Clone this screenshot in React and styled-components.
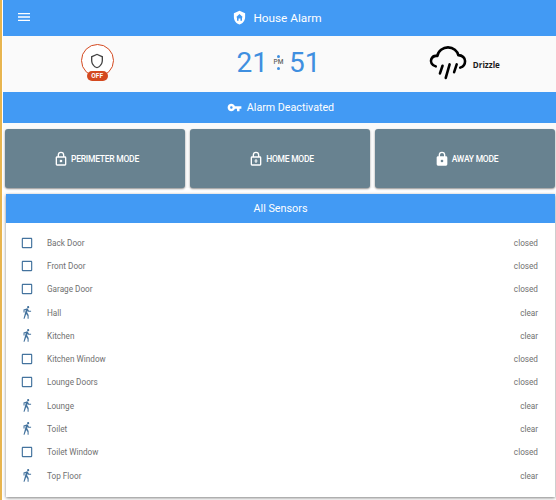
import React from "react";
import styled, { createGlobalStyle } from "styled-components";

const Global = createGlobalStyle`
  html, body { margin: 0; padding: 0; background: #fafafa; }
  body { font-family: Roboto, "Liberation Sans", sans-serif; }
`;

const Page = styled.div`
  width: 556px;
  height: 500px;
  overflow: hidden;
  box-sizing: border-box;
  border-left: 2px solid #e8b54f;
  padding-left: 1px;
  background: #fff;
`;
const Header = styled.header`
  position: relative;
  height: 36px;
  box-sizing: border-box;
  background: #429af4;
  color: #fff;
  display: flex;
  align-items: center;
  justify-content: center;
  gap: 6px;
  font-size: 11.8px;
  padding: 0 5px 1px 0;
`;
const MenuButton = styled.svg`
  position: absolute;
  left: 13px;
  top: 9px;
`;
const StatusRow = styled.section`
  height: 56px;
  background: #fafafa;
  display: grid;
  grid-template-columns: 1fr 1fr 1fr;
  align-items: center;
  justify-items: center;
`;
const Badge = styled.div`
  position: relative;
  width: 31px;
  height: 31px;
  border: 1.3px solid #d4491f;
  border-radius: 50%;
  display: flex;
  align-items: center;
  justify-content: center;
  margin: -6.5px 0 0 4px;
  background: #fff;
`;
const BadgeLabel = styled.span`
  position: absolute;
  left: 5px;
  bottom: -5px;
  width: 21px;
  height: 10px;
  border-radius: 5px;
  background: #d4491f;
  color: #fff;
  font-size: 6.5px;
  font-weight: 700;
  line-height: 10px;
  text-align: center;
`;
const Clock = styled.div`
  display: flex;
  align-items: center;
  color: #3f8fe0;
  font-size: 28px;
  line-height: 30px;
  margin: -3px 2px 0 0;
`;
const ClockMiddle = styled.div`
  width: 21px;
  display: flex;
  flex-direction: column;
  align-items: center;
  gap: 1px;
`;
const ClockDot = styled.span`
  width: 3px;
  height: 3px;
  border-radius: 50%;
  background: #3f8fe0;
`;
const Meridiem = styled.span`
  color: #666;
  font-size: 6.5px;
  line-height: 7px;
  font-weight: 500;
`;
const Weather = styled.div`
  display: flex;
  align-items: center;
  gap: 6px;
  margin: -4px 0 0 1px;
`;
const WeatherLabel = styled.span`
  font-family: "Open Sans", sans-serif;
  font-size: 8px;
  font-weight: 700;
  color: #1a1a1a;
  padding-top: 5px;
`;
const Banner = styled.div`
  height: 31px;
  box-sizing: border-box;
  background: #429af4;
  color: #fff;
  display: flex;
  align-items: center;
  justify-content: center;
  gap: 5px;
  font-size: 10.7px;
  padding-left: 2px;
`;
const Modes = styled.div`
  display: grid;
  grid-template-columns: repeat(3, 180px);
  gap: 5px;
  padding: 6px 0 0 2px;
  background: #fafafa;
`;
const ModeButton = styled.button`
  height: 59px;
  border: 0;
  border-radius: 3px;
  background: #688290;
  color: #fff;
  box-shadow: 0 1px 2px rgba(0, 0, 0, 0.45);
  display: flex;
  align-items: center;
  justify-content: center;
  gap: 2px;
  font-family: Roboto, sans-serif;
  font-size: 8.5px;
  letter-spacing: -0.25px;
  font-weight: 500;
  padding: 0 0 0 2px;
`;
const Card = styled.section`
  margin: 6px 0 0 3px;
  width: 549px;
  background: #fff;
  box-shadow: 0 1px 3px rgba(0, 0, 0, 0.5);
  padding-bottom: 10px;
`;
const CardTitle = styled.div`
  height: 29px;
  background: #429af4;
  color: #fff;
  font-size: 10.8px;
  display: flex;
  align-items: center;
  justify-content: center;
`;
const SensorList = styled.ul`
  list-style: none;
  margin: 0;
  padding: 8px 17px 0 13.5px;
`;
const Sensor = styled.li`
  height: 23.3px;
  display: flex;
  align-items: center;
  font-size: 8.2px;
  color: #707070;
`;
const SensorName = styled.span`
  margin-left: 13.5px;
  flex: 1;
`;

const Icon = ({ d, size = 24, color = "currentColor" }) => (
  <svg width={size} height={size} viewBox="0 0 24 24" fill={color}>
    <path d={d} />
  </svg>
);

const paths = {
  shieldHome: "M12,1L3,5V11C3,16.5 6.8,21.7 12,23C17.2,21.7 21,16.5 21,11V5L12,1M12,6.5L17.5,11.5H16V17H13.5V13.5H10.5V17H8V11.5H6.5L12,6.5Z",
  key: "M7 14C5.9 14 5 13.1 5 12S5.9 10 7 10 9 10.9 9 12 8.1 14 7 14M12.6 10C11.8 7.7 9.6 6 7 6C3.7 6 1 8.7 1 12S3.7 18 7 18C9.6 18 11.8 16.3 12.6 14H16V18H20V14H23V10H12.6Z",
  lockOutline: "M12,17C10.89,17 10,16.1 10,15C10,13.89 10.89,13 12,13A2,2 0 0,1 14,15A2,2 0 0,1 12,17M18,20V10H6V20H18M18,8A2,2 0 0,1 20,10V20A2,2 0 0,1 18,22H6C4.89,22 4,21.1 4,20V10C4,8.89 4.89,8 6,8H7V6A5,5 0 0,1 12,1A5,5 0 0,1 17,6V8H18M12,3A3,3 0 0,0 9,6V8H15V6A3,3 0 0,0 12,3Z",
  lockPlus: "M18,8H17V6A5,5 0 0,0 12,1A5,5 0 0,0 7,6V8H6A2,2 0 0,0 4,10V20A2,2 0 0,0 6,22H18A2,2 0 0,0 20,20V10A2,2 0 0,0 18,8M12,3A3,3 0 0,1 15,6V8H9V6A3,3 0 0,1 12,3M18,20H6V10H18V20M12,12.5L13,12.5V14.5H15V15.5H13V17.5H11V15.5H9V14.5H11V12.5H12Z",
  lock: "M12,17A2,2 0 0,0 14,15C14,13.89 13.1,13 12,13A2,2 0 0,0 10,15A2,2 0 0,0 12,17M18,8A2,2 0 0,1 20,10V20A2,2 0 0,1 18,22H6A2,2 0 0,1 4,20V10C4,8.89 4.9,8 6,8H7V6A5,5 0 0,1 12,1A5,5 0 0,1 17,6V8H18M12,3A3,3 0 0,0 9,6V8H15V6A3,3 0 0,0 12,3Z",
  walk: "M14.12,10H19V8.2H15.38L13.38,4.87C13.08,4.37 12.54,4.03 11.92,4.03C11.74,4.03 11.58,4.06 11.42,4.11L6,5.8V11H7.8V7.33L9.91,6.67L6,22H7.8L10.67,13.89L13,17V22H14.8V15.59L12.31,11.05L13.04,8.18M14,3.8C15,3.8 15.8,3 15.8,2C15.8,1 15,0.2 14,0.2C13,0.2 12.2,1 12.2,2C12.2,3 13,3.8 14,3.8Z",
  box: "M19,3H5C3.89,3 3,3.89 3,5V19A2,2 0 0,0 5,21H19A2,2 0 0,0 21,19V5C21,3.89 20.1,3 19,3M19,5V19H5V5H19Z",
  shieldOutline: "M21,11C21,16.55 17.16,21.74 12,23C6.84,21.74 3,16.55 3,11V5L12,1L21,5V11M12,21C15.75,20 19,15.54 19,11.22V6.3L12,3.18L5,6.3V11.22C5,15.54 8.25,20 12,21Z",
};

const sensors = [
  ["Back Door", "closed"],
  ["Front Door", "closed"],
  ["Garage Door", "closed"],
  ["Hall", "clear"],
  ["Kitchen", "clear"],
  ["Kitchen Window", "closed"],
  ["Lounge Doors", "closed"],
  ["Lounge", "clear"],
  ["Toilet", "clear"],
  ["Toilet Window", "closed"],
  ["Top Floor", "clear"],
];

const modes = [
  ["PERIMETER MODE", paths.lockOutline],
  ["HOME MODE", paths.lockPlus],
  ["AWAY MODE", paths.lock],
];

const Cloud = () => (
  <svg width="38" height="35" viewBox="-4 -4 118 108" fill="none" stroke="#000" strokeWidth="8" strokeLinecap="round" strokeLinejoin="round">
    <path d="M17 62C4 58 0 48 3 40C6 32 13 28 22 30C24 14 40 3 55 3C72 3 84 14 87 27C100 27 108 37 108 45C108 56 102 63 93 66" />
    <path d="M38 60L30 84M60 56L48 98M82 56L74 80" />
  </svg>
);

export default function App() {
  return (
    <Page>
      <Global />
      <Header>
        <MenuButton width="16" height="16" viewBox="0 0 24 24" fill="#fff">
          <path d="M3,6H21V8H3V6M3,11H21V13H3V11M3,16H21V18H3V16Z" />
        </MenuButton>
        <Icon d={paths.shieldHome} size={15} />
        <span>House Alarm</span>
      </Header>
      <StatusRow>
        <Badge>
          <Icon d={paths.shieldOutline} size={16} color="#444" />
          <BadgeLabel>OFF</BadgeLabel>
        </Badge>
        <Clock>
          <span>21</span>
          <ClockMiddle>
            <ClockDot />
            <Meridiem>PM</Meridiem>
            <ClockDot />
          </ClockMiddle>
          <span>51</span>
        </Clock>
        <Weather>
          <Cloud />
          <WeatherLabel>Drizzle</WeatherLabel>
        </Weather>
      </StatusRow>
      <Banner>
        <Icon d={paths.key} size={15} />
        <span>Alarm Deactivated</span>
      </Banner>
      <Modes>
        {modes.map(([label, d]) => (
          <ModeButton key={label}>
            <Icon d={d} size={16} />
            <span>{label}</span>
          </ModeButton>
        ))}
      </Modes>
      <Card>
        <CardTitle>All Sensors</CardTitle>
        <SensorList>
          {sensors.map(([name, state]) => (
            <Sensor key={name}>
              <Icon d={state === "closed" ? paths.box : paths.walk} size={14} color="#44739e" />
              <SensorName>{name}</SensorName>
              <span>{state}</span>
            </Sensor>
          ))}
        </SensorList>
      </Card>
    </Page>
  );
}
